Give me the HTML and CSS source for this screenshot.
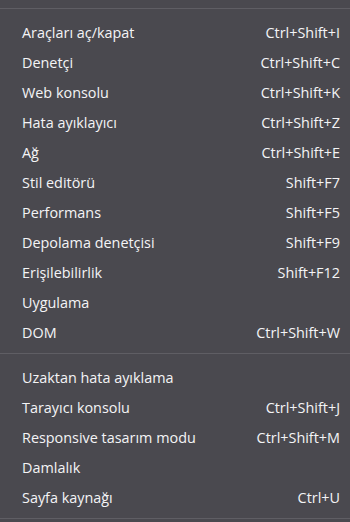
FILE: index.html
```html
<!DOCTYPE html>
<html lang="tr">
<head>
<meta charset="utf-8">
<link rel="stylesheet" href="styles.css">
</head>
<body>
<div class="menu">
  <div class="sep"></div>
  <div class="item"><span class="label">Araçları aç/kapat</span><span class="key">Ctrl+Shift+I</span></div>
  <div class="item"><span class="label">Denetçi</span><span class="key">Ctrl+Shift+C</span></div>
  <div class="item"><span class="label">Web konsolu</span><span class="key">Ctrl+Shift+K</span></div>
  <div class="item"><span class="label">Hata ayıklayıcı</span><span class="key">Ctrl+Shift+Z</span></div>
  <div class="item"><span class="label">Ağ</span><span class="key">Ctrl+Shift+E</span></div>
  <div class="item"><span class="label">Stil editörü</span><span class="key">Shift+F7</span></div>
  <div class="item"><span class="label">Performans</span><span class="key">Shift+F5</span></div>
  <div class="item"><span class="label">Depolama denetçisi</span><span class="key">Shift+F9</span></div>
  <div class="item"><span class="label">Erişilebilirlik</span><span class="key">Shift+F12</span></div>
  <div class="item"><span class="label">Uygulama</span><span class="key"></span></div>
  <div class="item"><span class="label">DOM</span><span class="key">Ctrl+Shift+W</span></div>
  <div class="sep"></div>
  <div class="item"><span class="label">Uzaktan hata ayıklama</span><span class="key"></span></div>
  <div class="item"><span class="label">Tarayıcı konsolu</span><span class="key">Ctrl+Shift+J</span></div>
  <div class="item"><span class="label">Responsive tasarım modu</span><span class="key">Ctrl+Shift+M</span></div>
  <div class="item"><span class="label">Damlalık</span><span class="key"></span></div>
  <div class="item"><span class="label">Sayfa kaynağı</span><span class="key">Ctrl+U</span></div>
  <div class="sep"></div>
</div>
</body>
</html>
```
FILE: styles.css
```css
html, body {
  margin: 0;
  padding: 0;
  background: #4a494f;
}
.menu {
  display: flex;
  flex-direction: column;
  padding-top: 1px;
  font-family: "Open Sans", "Noto Sans", sans-serif;
  font-size: 14.4px;
  color: #f4f4f6;
}
.sep {
  height: 1px;
  background: #5f5e64;
  margin: 7px 0;
}
.item {
  display: flex;
  justify-content: space-between;
  align-items: center;
  box-sizing: border-box;
  height: 30px;
  line-height: 27px;
  padding: 3px 10px 0 22px;
  white-space: nowrap;
}
```
